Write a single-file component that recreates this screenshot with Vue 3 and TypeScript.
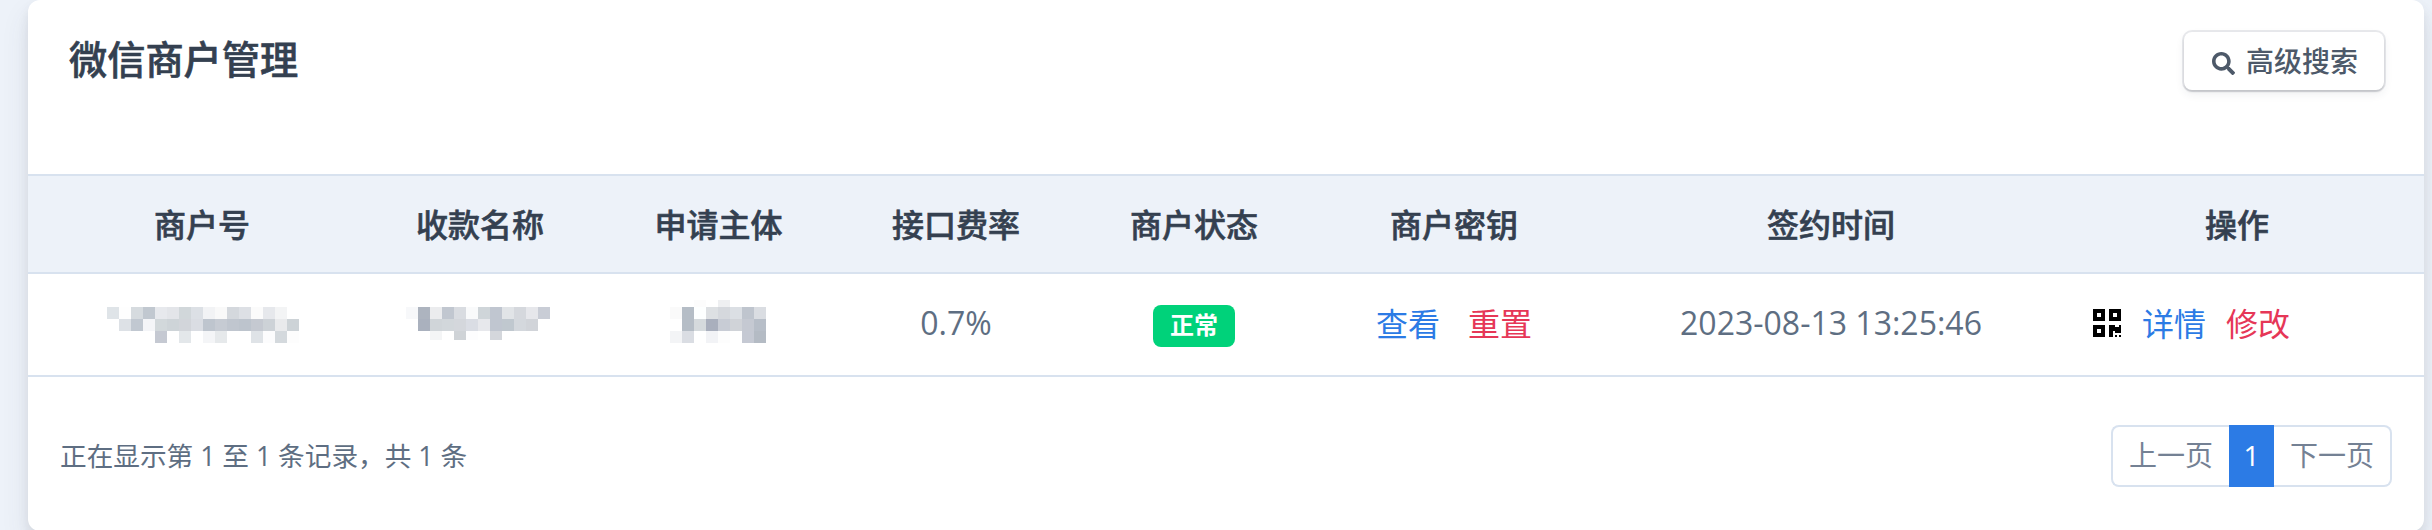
<script setup lang="ts">
type Cell = string | null

interface Mosaic {
  cols: number
  rows: Cell[][]
  top?: Cell[]
  lastHeight?: number
}

const _ = null

const merchantNo: Mosaic = {
  cols: 16,
  rows: [
    ['#dfe4e8', '#fefefe', '#d6dbdf', '#c1c8d0', '#e7e9ed', '#e3e5e9', '#d1d7da', '#dce0e5', '#f2f3f5', '#f9f9f9', '#d4d8dd', '#dde0e5', '#fbfbfb', '#e6e8ec', '#f3f4f5', _],
    [_, '#dde1e6', '#c1c8d1', '#f4f5f8', '#d2d8db', '#ced4d8', '#d2d5da', '#dadde3', '#bec5ce', '#c6cbd3', '#c0c6cf', '#bdc4cd', '#c5c9d1', '#cdd2d7', '#e9eaec', '#cdd3d7'],
    [_, _, _, _, '#c5c9d2', _, '#e3e7ea', _, '#f4f5f7', '#e6e9eb', _, _, '#dfe3e7', '#fcfcfd', '#d4d9dd', '#fdfdfd'],
  ],
}

const payeeName: Mosaic = {
  cols: 12,
  lastHeight: 9,
  rows: [
    ['#f7f8fa', '#adb4bf', '#ebecee', '#c1c7d0', '#d9dce1', '#f9fafb', '#cfd5d9', '#c0c6d0', '#e1e4e7', '#d5d8dd', '#e6e7eb', '#c9cdd6'],
    [_, '#aab1be', '#d0d5d9', '#d2d7db', '#d4d7dc', '#dadde4', '#e7e8ec', '#c0c6d0', '#c0c8cf', '#d4d8dd', '#d1d4d9', _],
    [_, _, '#f4f5f6', _, '#cfd3d7', '#fdfdfe', _, '#d4d7dc', _, _, _, _],
  ],
}

const subject: Mosaic = {
  cols: 8,
  top: [_, _, '#fcfcfc', _, '#eeeff1', _, _, _],
  rows: [
    ['#fafafa', '#b5bdc6', '#fdffff', '#dde0e3', '#d5d8dd', '#dbdfe4', '#bfc5ce', '#dadde2'],
    [_, '#b5bdc6', '#d5dadd', '#a9afbd', '#c8ccd5', '#d0d3d8', '#c5c9d2', '#b7bec8'],
    ['#f3f4f6', '#dadde3', _, '#f2f3f6', '#fdfdfd', _, '#c5c9d3', '#b4bbc4'],
  ],
}

const masked = [
  { key: 'no', data: merchantNo },
  { key: 'payee', data: payeeName },
  { key: 'subject', data: subject },
]

function rects(m: Mosaic) {
  const out: { x: number; y: number; h: number; fill: string }[] = []
  m.top?.forEach((c, i) => c && out.push({ x: i * 12, y: 0, h: 7, fill: c }))
  m.rows.forEach((row, r) =>
    row.forEach((c, i) => {
      if (c) out.push({ x: i * 12, y: 7 + r * 12, h: r === 2 ? m.lastHeight ?? 12 : 12, fill: c })
    }),
  )
  return out
}

const headers = ['商户号', '收款名称', '申请主体', '接口费率', '商户状态', '商户密钥', '签约时间', '操作']
</script>

<template>
  <div class="page">
    <section class="card">
      <header class="card-header">
        <h5 class="title">微信商户管理</h5>
        <button class="search" type="button">
          <svg class="search-icon" width="23" height="23" viewBox="0 0 512 512">
            <path fill="currentColor" d="M505 442.7L405.300 343c-4.500-4.500-10.600-7-17-7H372c27.600-35.300 44-79.700 44-128C416 93.100 322.900 0 208 0S0 93.100 0 208s93.100 208 208 208c48.300 0 92.700-16.400 128-44v16.300c0 6.400 2.500 12.500 7 17l99.700 99.700c9.400 9.400 24.600 9.400 33.900 0l28.300-28.300c9.400-9.400 9.400-24.600.1-34zM208 336c-70.700 0-128-57.200-128-128 0-70.700 57.200-128 128-128 70.700 0 128 57.200 128 128 0 70.700-57.200 128-128 128z" />
          </svg>
          <span>高级搜索</span>
        </button>
      </header>

      <div class="row head">
        <div v-for="h in headers" :key="h" class="cell">{{ h }}</div>
      </div>
      <div class="row body">
        <div v-for="m in masked" :key="m.key" class="cell" :class="m.key">
          <svg :width="m.data.cols * 12" height="43" shape-rendering="crispEdges">
            <rect v-for="(r, i) in rects(m.data)" :key="i" :x="r.x" :y="r.y" width="12" :height="r.h" :fill="r.fill" />
          </svg>
        </div>
        <div class="cell">0.7%</div>
        <div class="cell status"><span class="badge">正常</span></div>
        <div class="cell keys">
          <a class="blue">查看</a>
          <a class="red">重置</a>
        </div>
        <div class="cell">2023-08-13 13:25:46</div>
        <div class="cell actions">
          <svg class="qr" width="28" height="28" viewBox="0 0 28 28" shape-rendering="crispEdges">
            <path fill="#000" fill-rule="evenodd" d="M0 0h12v12H0zM4 4v4h4V4zM16 0h12v12H16zM20 4v4h4V4zM0 16h12v12H0zM4 20v4h4v-4zM16 16h6v2h4v-2h2v8h-6v-2h-2v6h-4zM22 26h2v2h-2zM26 26h2v2h-2z" />
          </svg>
          <a class="blue">详情</a>
          <a class="red">修改</a>
        </div>
      </div>

      <footer class="card-footer">
        <p class="info">正在显示第 1 至 1 条记录，共 1 条</p>
        <nav class="pager">
          <a class="page-item prev">上一页</a>
          <a class="page-item current">1</a>
          <a class="page-item next">下一页</a>
        </nav>
      </footer>
    </section>
  </div>
</template>

<style>
body {
  margin: 0;
  background: #edf2f9;
}
</style>

<style scoped>
.page {
  box-sizing: border-box;
  width: 2432px;
  height: 530px;
  padding: 0 8px 0 28px;
  overflow: hidden;
  background: #edf2f9;
  color: #5e6e82;
  font-family: 'Open Sans', 'Noto Sans CJK SC', sans-serif;
  font-size: 32px;
}
.card {
  height: 531px;
  border-radius: 12px;
  background: #fff;
  box-shadow: 0 14px 28px 0 rgba(65, 69, 88, 0.1), 0 6px 12px 0 rgba(0, 0, 0, 0.07);
}
.card-header {
  display: flex;
  justify-content: space-between;
  align-items: flex-start;
  box-sizing: border-box;
  height: 174px;
  padding: 32px 40px 0 41px;
}
.title {
  margin: 0;
  color: #344050;
  font-size: 38.2px;
  font-weight: 500;
  line-height: 55px;
  -webkit-text-stroke: 0.6px #344050;
}
.search {
  display: flex;
  align-items: center;
  gap: 11px;
  box-sizing: border-box;
  width: 200px;
  height: 58px;
  padding: 0 0 1px 28px;
  border: 0;
  border-radius: 8px;
  background: #fff;
  box-shadow: 0 0 0 2px rgba(43, 45, 80, 0.1), 0 4px 10px 0 rgba(43, 45, 80, 0.08), 0 2px 2px 0 rgba(0, 0, 0, 0.12);
  color: #4d5969;
  font: 500 28px/40px 'Open Sans', 'Noto Sans CJK SC', sans-serif;
}
.search-icon {
  margin-top: 5px;
}
.row {
  display: grid;
  grid-template-columns: 332px 240px 237px 238px 238px 282px 472px 357px;
  box-sizing: border-box;
  border-bottom: 2px solid #d8e2ef;
}
.head {
  height: 100px;
  border-top: 2px solid #d8e2ef;
  background: #edf2f9;
  color: #344050;
  font-weight: 500;
  -webkit-text-stroke: 0.6px #344050;
}
.body {
  height: 103px;
}
.cell {
  display: flex;
  align-items: center;
  justify-content: center;
  padding-bottom: 3px;
  white-space: nowrap;
}
.body .cell {
  padding-bottom: 5px;
}
.cell:first-child {
  padding-left: 16px;
}
.body .no {
  padding: 0 0 6px 18px;
}
.body .payee {
  padding: 0 4px 6px 0;
}
.body .subject {
  padding: 0 1px 6px 0;
}
.body .status {
  padding: 2px 0 0;
}
.head .cell:last-child {
  padding-right: 17px;
}
.badge {
  width: 82px;
  height: 42px;
  border-radius: 8px;
  background: #00d27a;
  color: #fff;
  font-size: 24px;
  font-weight: 700;
  line-height: 40px;
  text-align: center;
}
.keys {
  gap: 28px;
}
.blue {
  color: #2c7be5;
}
.red {
  color: #e63757;
}
.body .actions {
  justify-content: flex-start;
  padding-left: 26px;
}
.qr {
  margin-top: 2px;
}
.actions .blue {
  margin: 0 20px 0 21px;
}
.card-footer {
  display: flex;
  align-items: flex-start;
  justify-content: space-between;
  padding: 48px 32px 0 32px;
}
.info {
  margin: 0;
  font-size: 26.67px;
  line-height: 62px;
}
.pager {
  display: flex;
  font-size: 28px;
  line-height: 56px;
  color: #748194;
}
.page-item {
  box-sizing: border-box;
  height: 62px;
  border: 2px solid #d8e2ef;
  text-align: center;
}
.prev {
  width: 118px;
  border-right: 0;
  border-radius: 8px 0 0 8px;
}
.current {
  width: 45px;
  border-color: #2c7be5;
  background: #2c7be5;
  color: #fff;
}
.next {
  width: 118px;
  border-left: 0;
  border-radius: 0 8px 8px 0;
}
</style>
